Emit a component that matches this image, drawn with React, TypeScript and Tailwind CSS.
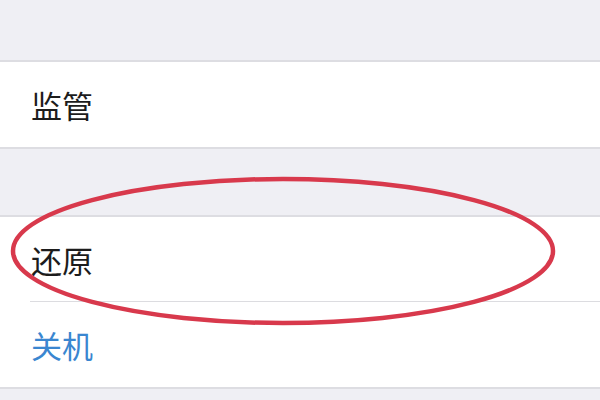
import React from 'react';

const font = { fontFamily: '"Noto Sans CJK SC", "Noto Sans", sans-serif' };

const Row: React.FC<{ label: string; blue?: boolean; inset?: boolean }> = ({ label, blue, inset }) => (
  <div className="bg-white h-[85px] flex items-center pl-[31px] relative">
    <span className={`text-[31px] leading-none ${blue ? 'text-[#3a86d0]' : 'text-[#1c1c1c]'}`} style={font}>
      {label}
    </span>
    {inset && <div className="absolute bottom-0 left-[30px] right-0 h-px bg-[#dcdce0]" />}
  </div>
);

export default function App() {
  return (
    <div className="relative w-[600px] h-[400px] overflow-hidden bg-[#efeff4]">
      <div className="h-[62px] border-b-2 border-[#dddde2]" />
      <div className="border-b-2 border-[#dddde2]">
        <Row label="监管" />
      </div>
      <div className="h-[68px] border-b-2 border-[#dddde2]" />
      <Row label="还原" inset />
      <div className="border-b-2 border-[#dddde2]">
        <Row label="关机" blue />
      </div>
      <svg className="absolute left-0 top-0 pointer-events-none" width="600" height="400" viewBox="0 0 600 400">
        <ellipse cx="283" cy="251" rx="270" ry="72" fill="none" stroke="#d8394c" strokeWidth="4.5" />
      </svg>
    </div>
  );
}
